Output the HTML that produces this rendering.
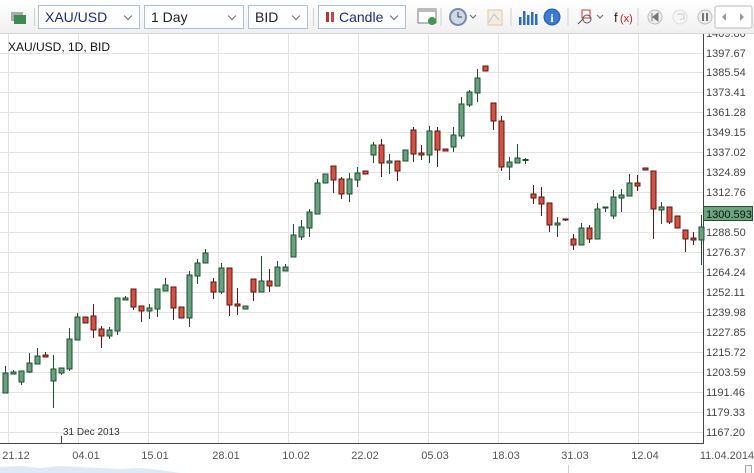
<!DOCTYPE html>
<html><head><meta charset="utf-8"><style>
body{margin:0;width:754px;height:473px;overflow:hidden;background:#fff;font-family:"Liberation Sans",sans-serif;position:relative}
.tb{position:absolute;left:0;top:0;width:754px;height:33px;background:linear-gradient(#fff,#f0f0f0);border-bottom:1px solid #d8d8d8}
.dd{position:absolute;top:5px;height:24px;border:1px solid #a9c2dc;background:#fff;box-sizing:border-box;font-size:14px;color:#222;line-height:22px;padding-left:6px}
.dd:after{content:"";position:absolute;right:8px;top:7px;width:5px;height:5px;border-right:1px solid #666;border-bottom:1px solid #666;transform:rotate(45deg)}
.sep{position:absolute;top:8px;width:1px;height:18px;background:#d0d0d0}
.ax{position:absolute;font-size:11px;color:#333}
</style></head><body>
<div class="tb">
<div style="position:absolute;left:11px;top:12px;width:12px;height:9px;background:#aaa"></div>
<div style="position:absolute;left:14px;top:15px;width:12px;height:9px;background:#3e8a52"></div>
<div class="sep" style="left:34px"></div>
<div class="dd" style="left:38px;width:102px;color:#1a2a80">XAU/USD</div>
<div class="dd" style="left:144px;width:100px">1 Day</div>
<div class="dd" style="left:248px;width:60px">BID</div>
<div class="sep" style="left:313px"></div>
<div class="dd" style="left:318px;width:88px;padding-left:20px;color:#1a2a80">Candle
<span style="position:absolute;left:7px;top:6px;width:3px;height:10px;background:#b33"></span><span style="position:absolute;left:12px;top:6px;width:3px;height:10px;background:#c44"></span></div>
<svg style="position:absolute;left:410px;top:0" width="344" height="33">
<rect x="8" y="9" width="18" height="14" fill="#fff" stroke="#777"/><rect x="8" y="9" width="18" height="3" fill="#bbb"/><circle cx="22" cy="21" r="4" fill="#3a9a4a"/>
<line x1="31" y1="8" x2="31" y2="26" stroke="#d0d0d0"/>
<circle cx="48" cy="17" r="8" fill="#cfd8e8" stroke="#7a8aa8" stroke-width="2"/><path d="M48 12v5h4" stroke="#345" fill="none"/>
<path d="M60 15l3 3 3-3" stroke="#666" fill="none"/>
<path d="M78 10h14v15h-14z" fill="#f4ede0" stroke="#e0c8a0"/><path d="M79 22l5-8 5 6" stroke="#b0c8e0" fill="none"/>
<line x1="101" y1="8" x2="101" y2="26" stroke="#d0d0d0"/>
<g fill="#2a6ac8"><rect x="109" y="17" width="2.5" height="8"/><rect x="113" y="11" width="2.5" height="14"/><rect x="117" y="15" width="2.5" height="10"/><rect x="121" y="12" width="2.5" height="13"/><rect x="125" y="14" width="2.5" height="11"/></g>
<circle cx="142" cy="17" r="8" fill="#3a7bd5" stroke="#2a5aa8"/><text x="142" y="22" font-size="12" font-weight="bold" fill="#fff" text-anchor="middle" font-family="Liberation Serif">i</text>
<line x1="158" y1="8" x2="158" y2="26" stroke="#d0d0d0"/>
<rect x="172" y="10" width="8" height="8" fill="none" stroke="#d33"/><circle cx="177" cy="19" r="4" fill="none" stroke="#555"/><path d="M168 24l5-5" stroke="#555"/>
<path d="M187 15l3 3 3-3" stroke="#666" fill="none"/>
<text x="204" y="22" font-size="13" fill="#222">f</text><text x="210" y="22" font-size="11" fill="#c22">(x)</text>
<line x1="228" y1="8" x2="228" y2="26" stroke="#d0d0d0"/>
<circle cx="245" cy="17" r="7" fill="#eee" stroke="#bbb"/><path d="M242 13v8M248 13l-5 4 5 4z" fill="#777" stroke="#777"/>
<circle cx="270" cy="17" r="7" fill="#f6f6f6" stroke="#ddd"/><path d="M267 14h7v5h-4" fill="none" stroke="#ccc"/>
<circle cx="295" cy="17" r="7" fill="#eee" stroke="#bbb"/><path d="M293 13v8M297 13v8" stroke="#777" stroke-width="2"/>
<rect x="305" y="6" width="37" height="22" fill="#fff" stroke="#bbb" rx="2"/><path d="M316 13l-4 4 4 4zM330 13l4 4-4 4z" fill="#999"/>
</svg>
</div>
<svg style="position:absolute;left:0;top:34px" width="754" height="439" viewBox="0 34 754 439">
<g stroke="#e2e2e2" stroke-width="1">
<path d="M8.5 34V443M78.5 34V443M148.5 34V443M218.5 34V443M288.5 34V443M358.5 34V443M428.5 34V443M498.5 34V443M568.5 34V443M638.5 34V443"/>
<path d="M0 33.5H703M0 53.5H703M0 72.5H703M0 92.5H703M0 112.5H703M0 132.5H703M0 152.5H703M0 172.5H703M0 192.5H703M0 212.5H703M0 232.5H703M0 252.5H703M0 272.5H703M0 292.5H703M0 312.5H703M0 332.5H703M0 352.5H703M0 372.5H703M0 392.5H703M0 412.5H703M0 432.5H703"/>
</g>
<path d="M703.5 34V443.5H0" stroke="#444" fill="none"/>
<path d="M61.5 436V443" stroke="#444"/>
<text x="63" y="435" font-size="10" fill="#333" font-family="Liberation Sans">31 Dec 2013</text>
<text x="8" y="51" font-size="12" fill="#111" font-family="Liberation Sans">XAU/USD, 1D, BID</text>
<g id="c" stroke-width="1"></g>
<g font-size="11" fill="#444" font-family="Liberation Sans">
<text x="706" y="37">1409.80</text><text x="706" y="57">1397.67</text><text x="706" y="76">1385.54</text><text x="706" y="96">1373.41</text><text x="706" y="116">1361.28</text><text x="706" y="136">1349.15</text><text x="706" y="156">1337.02</text><text x="706" y="176">1324.89</text><text x="706" y="196">1312.76</text><text x="706" y="236">1288.50</text><text x="706" y="256">1276.37</text><text x="706" y="276">1264.24</text><text x="706" y="296">1252.11</text><text x="706" y="316">1239.98</text><text x="706" y="336">1227.85</text><text x="706" y="356">1215.72</text><text x="706" y="376">1203.59</text><text x="706" y="396">1191.46</text><text x="706" y="416">1179.33</text><text x="706" y="436">1167.20</text>
</g>
<rect x="703.5" y="206.5" width="49" height="14" fill="#6aa57e" stroke="#2a4a33"/>
<text x="706" y="218" font-size="11" fill="#111" font-family="Liberation Sans">1300.593</text>
<g font-size="11" fill="#555" font-family="Liberation Sans" text-anchor="middle">
<text x="16" y="459">21.12</text><text x="86" y="459">04.01</text><text x="155" y="459">15.01</text><text x="226" y="459">28.01</text><text x="296" y="459">10.02</text><text x="365" y="459">22.02</text><text x="435" y="459">05.03</text><text x="506" y="459">18.03</text><text x="575" y="459">31.03</text><text x="645" y="459">12.04</text><text x="727" y="459">11.04.2014</text>
</g>
<path d="M0 473V467L20 466L40 468L60 466L80 467L100 468L120 469L140 468L160 470L180 473Z" fill="#dce9f7"/>
<rect x="745.5" y="465.5" width="6" height="8" fill="#f4f4f4" stroke="#aaa"/>
<rect x="568" y="465" width="1" height="8" fill="#ccc"/>
</svg>
<script>
var d=[[5,373,393,366,393,'g'],[13,372,374,370,374,'g'],[21,371,382,371,385,'g'],[29,363,372,353,373,'g'],[37,356,364,348,364,'g'],[45,355,357,352,357,'r'],[53,369,381,355,408,'g'],[61,368,373,368,375,'g'],[69,339,369,328,371,'g'],[77,317,340,313,340,'g'],[85,317,323,317,323,'r'],[93,316,330,304,338,'r'],[101,329,336,326,348,'r'],[109,330,336,327,339,'g'],[117,298,331,298,335,'g'],[125,298,300,296,300,'g'],[133,289,307,289,310,'r'],[141,306,311,306,322,'r'],[149,308,311,304,319,'g'],[157,289,309,289,317,'g'],[165,285,291,278,291,'g'],[173,287,308,287,320,'r'],[181,307,318,307,318,'r'],[189,275,318,271,327,'g'],[197,263,276,259,284,'g'],[205,253,263,249,263,'g'],[213,282,292,278,299,'r'],[221,268,292,263,294,'g'],[229,268,305,268,316,'r'],[237,304,306,288,315,'r'],[245,306,309,306,309,'g'],[253,279,292,279,301,'r'],[261,281,292,256,292,'g'],[269,281,286,269,292,'r'],[277,267,286,261,286,'g'],[285,267,271,264,271,'g'],[293,235,257,224,257,'g'],[301,227,237,220,240,'g'],[309,212,228,209,237,'g'],[317,183,214,179,214,'g'],[325,174,183,174,183,'g'],[333,166,180,166,193,'r'],[341,179,194,177,199,'r'],[349,179,194,173,202,'g'],[357,173,180,167,187,'g'],[365,171,174,171,174,'r'],[373,145,155,142,163,'g'],[381,145,163,139,177,'r'],[389,161,163,154,174,'g'],[397,161,171,161,181,'r'],[405,150,161,150,161,'g'],[413,130,154,127,162,'r'],[421,153,155,145,160,'r'],[429,131,155,126,163,'g'],[437,131,150,127,167,'r'],[445,149,151,149,151,'r'],[453,135,147,127,152,'g'],[461,104,136,97,139,'g'],[469,92,105,90,107,'g'],[477,78,93,69,102,'g'],[485,66,71,66,71,'r'],[493,103,121,103,130,'r'],[501,121,167,116,171,'r'],[509,162,167,157,180,'g'],[517,158,163,144,163,'g'],[525,159.5,160.5,158,164,'g'],[533,194,198,185,204,'r'],[541,197,204,187,216,'r'],[549,203,225,203,232,'r'],[557,223,225,217,237,'g'],[565,219,220,219,221,'r'],[573,239,245,234,250,'r'],[581,228,245,223,245,'g'],[589,228,239,225,243,'r'],[597,209,239,203,239,'g'],[605,207,208,207,212,'g'],[613,197,216,190,219,'g'],[621,195,198,189,212,'g'],[629,183,196,174,196,'g'],[637,183,186,175,191,'r'],[645,168,170,168,170,'r'],[653,171,209,171,239,'r'],[661,207,210,202,224,'g'],[669,207,222,207,224,'r'],[677,216,228,216,228,'r'],[685,230,239,230,252,'r'],[693,238,240,232,245,'r'],[701,227,240,215,265,'g']];
var s='';d.forEach(function(c){var g=c[5]=='g',st=g?'#1e4e30':'#5a1610',f=g?'#66a37c':'#d9503c';
s+='<line x1="'+(c[0]+.5)+'" x2="'+(c[0]+.5)+'" y1="'+c[3]+'" y2="'+c[4]+'" stroke="'+st+'"/>';
s+='<rect x="'+(c[0]-2)+'" y="'+c[1]+'" width="5" height="'+Math.max(1,c[2]-c[1])+'" fill="'+f+'" stroke="'+st+'"/>';});
document.getElementById('c').innerHTML=s;
</script>
</body></html>
